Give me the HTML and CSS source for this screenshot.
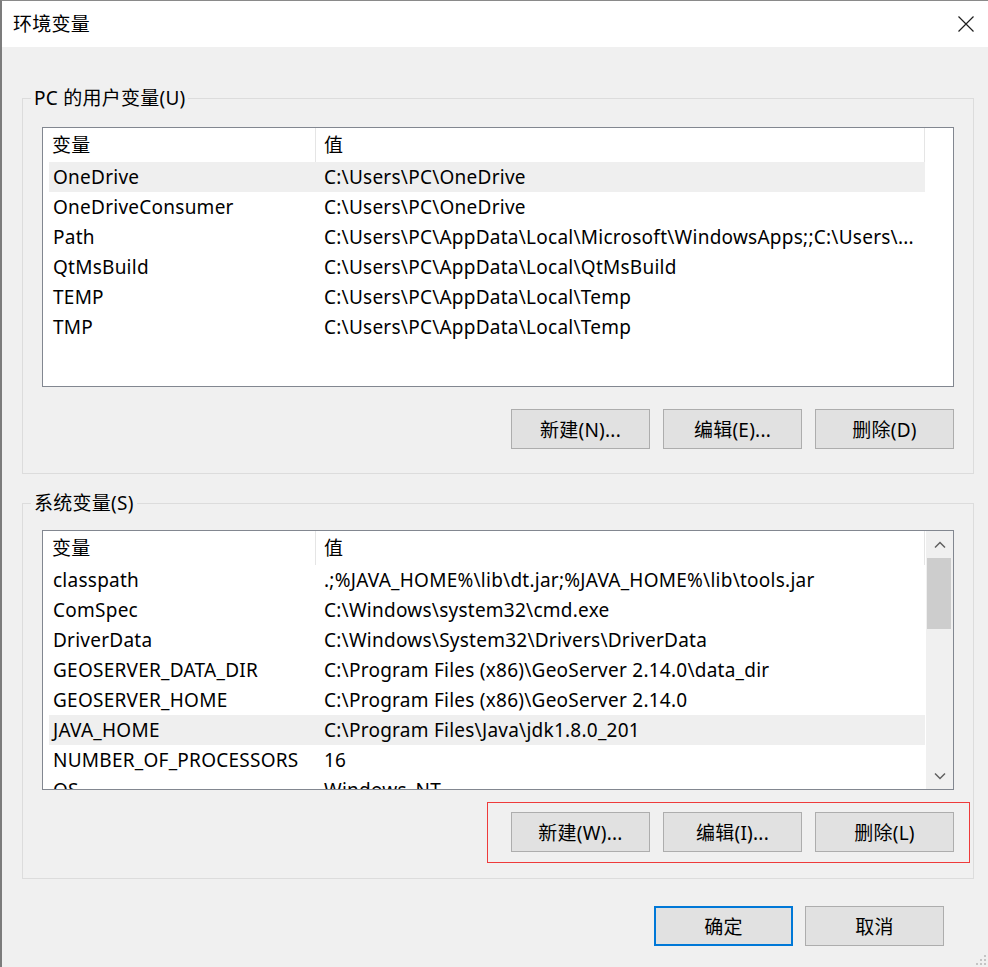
FILE: index.html
```html
<!DOCTYPE html>
<html lang="zh-CN">
<head>
  <meta charset="UTF-8" />
  <title>环境变量</title>
  <link rel="stylesheet" href="styles.css">
</head>
<body>
  <div class="window">
    <div class="titlebar">
      <span class="title">环境变量</span>
      <span class="close">
        <svg width="16" height="16" viewBox="0 0 16 16"><path d="M0.5 0.5 L15.5 15.5 M15.5 0.5 L0.5 15.5" stroke="#1e1e1e" stroke-width="1.2" fill="none"/></svg>
      </span>
    </div>

    <div class="content">
      <!-- 用户变量 -->
      <div class="group group-user">
        <span class="group-title">PC 的用户变量(U)</span>
        <div class="listview">
          <div class="lv-main">
            <div class="lv-head"><div class="col-name">变量</div><div class="col-value">值</div></div>
            <div class="lv-row selected"><div class="col-name">OneDrive</div><div class="col-value">C:\Users\PC\OneDrive</div></div>
            <div class="lv-row"><div class="col-name">OneDriveConsumer</div><div class="col-value">C:\Users\PC\OneDrive</div></div>
            <div class="lv-row"><div class="col-name">Path</div><div class="col-value">C:\Users\PC\AppData\Local\Microsoft\WindowsApps;;C:\Users\...</div></div>
            <div class="lv-row"><div class="col-name">QtMsBuild</div><div class="col-value">C:\Users\PC\AppData\Local\QtMsBuild</div></div>
            <div class="lv-row"><div class="col-name">TEMP</div><div class="col-value">C:\Users\PC\AppData\Local\Temp</div></div>
            <div class="lv-row"><div class="col-name">TMP</div><div class="col-value">C:\Users\PC\AppData\Local\Temp</div></div>
          </div>
        </div>
        <div class="btn-row">
          <button class="btn">新建(N)...</button>
          <button class="btn">编辑(E)...</button>
          <button class="btn">删除(D)</button>
        </div>
      </div>

      <!-- 系统变量 -->
      <div class="group group-system">
        <span class="group-title">系统变量(S)</span>
        <div class="listview">
          <div class="lv-main">
            <div class="lv-head"><div class="col-name">变量</div><div class="col-value">值</div></div>
            <div class="lv-row"><div class="col-name">classpath</div><div class="col-value">.;%JAVA_HOME%\lib\dt.jar;%JAVA_HOME%\lib\tools.jar</div></div>
            <div class="lv-row"><div class="col-name">ComSpec</div><div class="col-value">C:\Windows\system32\cmd.exe</div></div>
            <div class="lv-row"><div class="col-name">DriverData</div><div class="col-value">C:\Windows\System32\Drivers\DriverData</div></div>
            <div class="lv-row"><div class="col-name">GEOSERVER_DATA_DIR</div><div class="col-value">C:\Program Files (x86)\GeoServer 2.14.0\data_dir</div></div>
            <div class="lv-row"><div class="col-name">GEOSERVER_HOME</div><div class="col-value">C:\Program Files (x86)\GeoServer 2.14.0</div></div>
            <div class="lv-row selected"><div class="col-name">JAVA_HOME</div><div class="col-value">C:\Program Files\Java\jdk1.8.0_201</div></div>
            <div class="lv-row"><div class="col-name">NUMBER_OF_PROCESSORS</div><div class="col-value">16</div></div>
            <div class="lv-row"><div class="col-name">OS</div><div class="col-value">Windows_NT</div></div>
          </div>
          <div class="scrollbar">
            <div class="sb-btn">
              <svg width="12" height="8" viewBox="0 0 12 8"><path d="M1 6.5 L6 1.5 L11 6.5" stroke="#606060" stroke-width="1.5" fill="none"/></svg>
            </div>
            <div class="sb-track"><div class="sb-thumb"></div></div>
            <div class="sb-btn">
              <svg width="12" height="8" viewBox="0 0 12 8"><path d="M1 1.5 L6 6.5 L11 1.5" stroke="#606060" stroke-width="1.5" fill="none"/></svg>
            </div>
          </div>
        </div>
        <div class="btn-row marked">
          <button class="btn">新建(W)...</button>
          <button class="btn">编辑(I)...</button>
          <button class="btn">删除(L)</button>
        </div>
      </div>

      <div class="dialog-buttons">
        <button class="btn default">确定</button>
        <button class="btn">取消</button>
      </div>
    </div>

    <svg class="grip" width="12" height="12" viewBox="0 0 12 12">
      <rect x="9" y="1" width="2" height="2" fill="#c4c4c4"/>
      <rect x="5" y="5" width="2" height="2" fill="#c4c4c4"/>
      <rect x="9" y="5" width="2" height="2" fill="#c4c4c4"/>
      <rect x="1" y="9" width="2" height="2" fill="#c4c4c4"/>
      <rect x="5" y="9" width="2" height="2" fill="#c4c4c4"/>
      <rect x="9" y="9" width="2" height="2" fill="#c4c4c4"/>
    </svg>
  </div>
</body>
</html>
```

FILE: styles.css
```css
body {
  margin: 0;
  font-family: "Noto Sans", "Noto Sans CJK SC", sans-serif;
  font-size: 19px;
  letter-spacing: 0.25px;
  color: #000;
  background: #f0f0f0;
}

.window {
  position: relative;
  width: 988px;
  height: 967px;
  box-sizing: border-box;
  border-top: 1px solid #8a8a8a;
  border-left: 2px solid #7c7c7c;
  background: #f0f0f0;
  overflow: hidden;
}

.titlebar {
  height: 46px;
  background: #fff;
  display: flex;
  align-items: center;
  justify-content: space-between;
  padding: 0 14px 0 11px;
}
.title {
  line-height: 46px;
}
.close {
  display: flex;
}

.content {
  padding: 51px 14px 0 20px;
}

.group {
  position: relative;
  border: 1px solid #dcdcdc;
  padding: 28px 19px 24px 19px;
}
.group-title {
  position: absolute;
  top: -13px;
  left: 8px;
  padding: 0 3px;
  line-height: 24px;
  background: #f0f0f0;
}
.group-system {
  margin-top: 29px;
  padding-top: 26px;
  padding-bottom: 15px;
}

.listview {
  height: 260px;
  box-sizing: border-box;
  border: 1px solid #828790;
  background: #fff;
  display: flex;
}
.lv-main {
  flex: 1;
  overflow: hidden;
}

.lv-head {
  display: flex;
  height: 34px;
  line-height: 34px;
}
.lv-head .col-name {
  width: 272px;
  padding-left: 9px;
  box-sizing: border-box;
}
.lv-head .col-value {
  width: 610px;
  box-sizing: border-box;
  padding-left: 8px;
  border-left: 1px solid #e5e5e5;
  border-right: 1px solid #e5e5e5;
}

.lv-row {
  display: flex;
  width: 876px;
  height: 30px;
  line-height: 30px;
  margin-left: 6px;
  white-space: nowrap;
}
.lv-row.selected {
  background: #efefef;
}
.lv-row .col-name {
  width: 266px;
  flex-shrink: 0;
  padding-left: 4px;
  box-sizing: border-box;
}
.lv-row .col-value {
  flex: 1;
  padding-left: 9px;
  overflow: hidden;
}

.scrollbar {
  width: 27px;
  background: #f0f0f0;
  display: flex;
  flex-direction: column;
}
.sb-btn {
  height: 27px;
  display: flex;
  align-items: center;
  justify-content: center;
}
.sb-track {
  flex: 1;
}
.sb-thumb {
  height: 71px;
  margin: 0 2px 0 1px;
  background: #cdcdcd;
}

.btn-row {
  display: flex;
  justify-content: flex-end;
  gap: 13px;
  margin-top: 22px;
}
.btn-row.marked {
  width: fit-content;
  margin: 12px -16px 0 auto;
  padding: 9px 15px 10px 23px;
  border: 1px solid #ee3b3b;
}

.btn {
  width: 139px;
  height: 40px;
  box-sizing: border-box;
  background: #e1e1e1;
  border: 1px solid #adadad;
  font-family: inherit;
  font-size: 19px;
  letter-spacing: 0.25px;
  color: #000;
  padding: 0;
}
.btn.default {
  border: 2px solid #0078d7;
}

.dialog-buttons {
  display: flex;
  justify-content: flex-end;
  gap: 12px;
  margin-top: 27px;
  padding-right: 30px;
}

.grip {
  position: absolute;
  right: 1px;
  bottom: 1px;
}
```
